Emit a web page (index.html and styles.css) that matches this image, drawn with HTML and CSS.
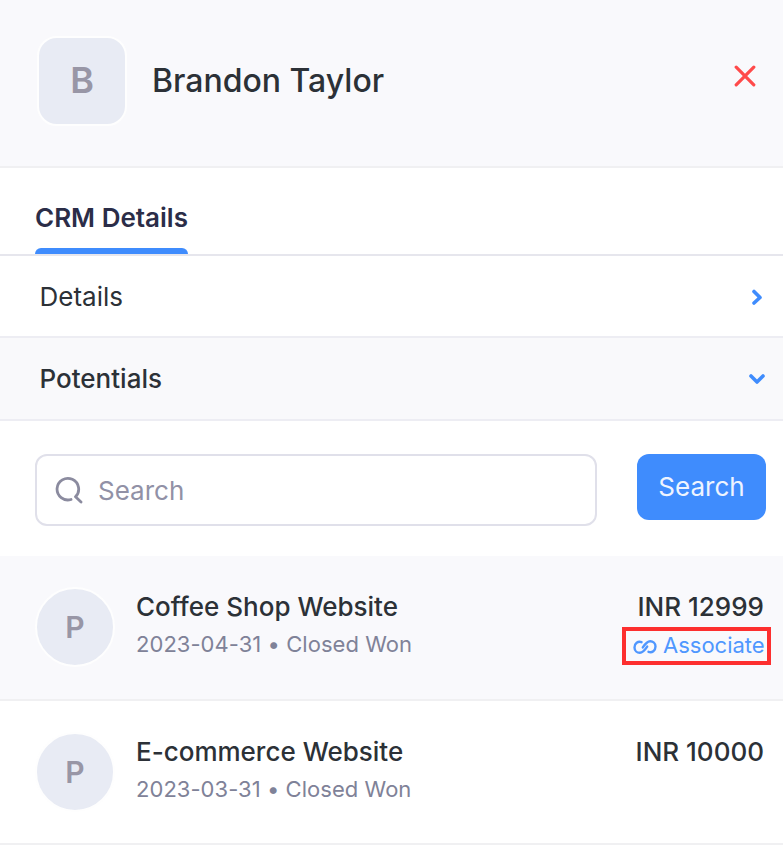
FILE: index.html
```
<!DOCTYPE html>
<html lang="en">
<head>
    <meta charset="UTF-8">
    <meta name="viewport" content="width=device-width, initial-scale=1.0">
    <title>CRM Details</title>
    <link rel="stylesheet" href="styles.css">
</head>
<body>
    <div class="panel">
        <header class="header">
            <div class="avatar">B</div>
            <h1 class="name">Brandon Taylor</h1>
            <button class="close" aria-label="Close">
                <svg width="22" height="22" viewBox="0 0 22 22"><path d="M2.2 2.2 19.8 19.8M19.8 2.2 2.2 19.8"/></svg>
            </button>
        </header>

        <nav class="tabs">
            <a class="tab">CRM Details</a>
        </nav>

        <div class="section">
            <span>Details</span>
            <svg class="arrow" width="18" height="18" viewBox="0 0 18 18"><path d="M6 4.500 12 10.500 6 16"/></svg>
        </div>
        <div class="section open">
            <span>Potentials</span>
            <svg class="arrow" width="18" height="18" viewBox="0 0 18 18"><path d="M3 7 9 13 15 7"/></svg>
        </div>

        <div class="search">
            <label class="search-box">
                <svg width="28" height="28" viewBox="0 0 28 28"><path d="M16 23.500A10.800 10.800 0 1 1 20.500 20.800L26 26"/></svg>
                <input type="text" placeholder="Search">
            </label>
            <button class="search-btn">Search</button>
        </div>

        <div class="item active">
            <div class="circle">P</div>
            <div class="info">
                <div class="title">Coffee Shop Website</div>
                <div class="meta">2023-04-31 • Closed Won</div>
            </div>
            <div class="right">
                <div class="amount">INR 12999</div>
                <a class="associate">
                    <svg width="24" height="16" viewBox="0 0 24 16"><path d="M8.500 3.200C5 1.800 1.500 4.500 1.500 8.400 1.500 12 4.200 13.800 6.800 13.800 9.500 13.800 11 12.500 14.200 7.600M15.500 12.800C19 14.200 22.500 11.500 22.500 7.600 22.500 4 19.800 2.200 17.200 2.200 14.500 2.200 13 3.500 9.800 8.400"/></svg>
                    <span>Associate</span>
                </a>
            </div>
        </div>
        <div class="item">
            <div class="circle">P</div>
            <div class="info">
                <div class="title">E-commerce Website</div>
                <div class="meta">2023-03-31 • Closed Won</div>
            </div>
            <div class="right">
                <div class="amount">INR 10000</div>
            </div>
        </div>
    </div>
</body>
</html>
```
FILE: styles.css
```
* {
    box-sizing: border-box;
}

body {
    margin: 0;
    font-family: Inter, 'Liberation Sans', sans-serif;
    font-size: 26px;
    color: #2c3137;
    background-color: #fff;
    overflow: hidden;
}

svg {
    display: block;
    fill: none;
    stroke-linecap: round;
    stroke-linejoin: round;
}

button {
    border: none;
    padding: 0;
    font-family: inherit;
    cursor: pointer;
}

.header {
    display: flex;
    align-items: center;
    height: 168px;
    padding: 0 27px 4px 37px;
    background-color: #f9f9fc;
    border-bottom: 2px solid #f0f0f2;
}

.avatar {
    display: flex;
    justify-content: center;
    align-items: center;
    width: 90px;
    height: 90px;
    padding-bottom: 2px;
    border: 2px solid #fefefe;
    border-radius: 20px;
    background-color: #e8ebf4;
    color: #9896a6;
    font-size: 36px;
    font-weight: 600;
}

.name {
    flex: 1;
    margin: 0 0 1px 25px;
    font-size: 32px;
    font-weight: 500;
}

.close {
    margin-bottom: 10px;
    background: none;
}

.close svg {
    stroke: #ff4a4a;
    stroke-width: 3.2;
}

.tabs {
    display: flex;
    height: 88px;
    padding: 0 35px;
    border-bottom: 2px solid #e6e6ed;
}

.tab {
    position: relative;
    padding-top: 34px;
    line-height: 32px;
    font-weight: 600;
    color: #2b2d48;
}

.tab::after {
    content: '';
    position: absolute;
    left: 0;
    right: 0;
    bottom: 0;
    height: 6px;
    border-radius: 6px 6px 0 0;
    background-color: #3f8cfd;
}

.section {
    display: flex;
    justify-content: space-between;
    align-items: center;
    height: 82px;
    padding: 0 17px 0 39.5px;
    border-bottom: 2px solid #ededf3;
}

.section.open {
    height: 83px;
    padding-bottom: 1px;
    background-color: #f9f9fb;
    font-weight: 500;
}

.arrow {
    stroke: #3f8cfd;
    stroke-width: 3.6;
}

.search {
    display: flex;
    justify-content: space-between;
    align-items: flex-start;
    height: 135px;
    padding: 33px 17px 0 35px;
}

.search-box {
    display: flex;
    align-items: center;
    gap: 15px;
    width: 562px;
    height: 72px;
    padding-left: 18px;
    border: 2px solid #e0e0ea;
    border-radius: 12px;
}

.search-box svg {
    stroke: #8b8b9f;
    stroke-width: 2.8;
}

.search-box input {
    flex: 1;
    padding: 0;
    border: none;
    outline: none;
    font: inherit;
}

.search-box input::placeholder {
    color: #9191a6;
}

.search-btn {
    width: 129px;
    height: 66px;
    padding-bottom: 2px;
    border-radius: 12px;
    background-color: #3f8cfd;
    color: #eef4ff;
    font-size: 26px;
}

.item {
    display: flex;
    height: 144px;
    padding: 31px 19px 0 35px;
    border-bottom: 2px solid #f0f0f2;
}

.item.active {
    height: 145px;
    background-color: #f9f9fc;
}

.circle {
    display: flex;
    justify-content: center;
    align-items: center;
    width: 80px;
    height: 80px;
    border: 2px solid #fefefe;
    border-radius: 50%;
    background-color: #e8ebf4;
    color: #9896a6;
    font-size: 30px;
    font-weight: 600;
}

.info {
    flex: 1;
    padding-top: 4px;
    padding-left: 21px;
}

.title,
.amount {
    line-height: 32px;
    font-weight: 500;
}

.meta {
    margin-top: 7px;
    line-height: 28px;
    font-size: 22px;
    letter-spacing: 0.04px;
    color: #7f8298;
}

.right {
    padding-top: 4px;
    text-align: right;
}

.associate {
    display: flex;
    align-items: center;
    gap: 6px;
    width: 149px;
    height: 38px;
    margin: 4px -7px 0 0;
    padding: 0 0 2px 7px;
    border: 4px solid #fd2f2f;
    color: #4f97ff;
    font-size: 22px;
}

.associate svg {
    flex-shrink: 0;
    margin-top: 3px;
    stroke: #4f97ff;
    stroke-width: 2.4;
}
```
